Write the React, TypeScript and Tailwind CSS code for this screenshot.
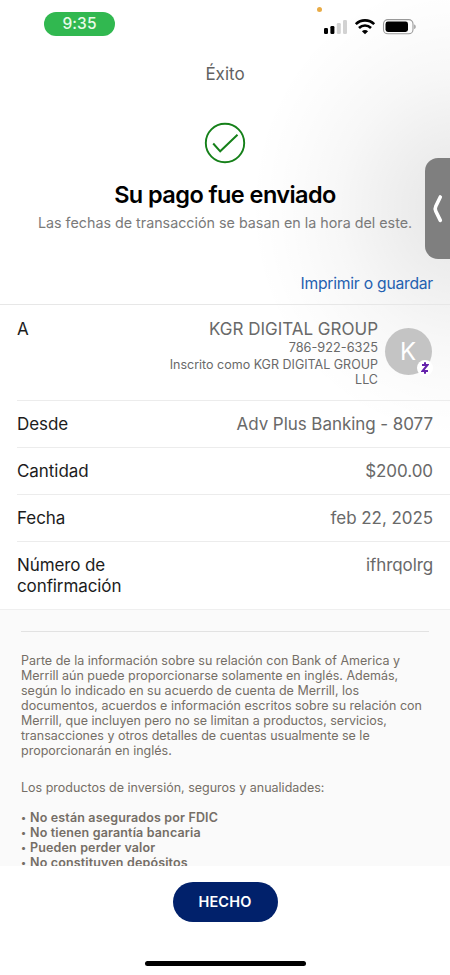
import type { ReactNode } from "react";

const paragraph = [
  "Parte de la información sobre su relación con Bank of America y",
  "Merrill aún puede proporcionarse solamente en inglés. Además,",
  "según lo indicado en su acuerdo de cuenta de Merrill, los",
  "documentos, acuerdos e información escritos sobre su relación con",
  "Merrill, que incluyen pero no se limitan a productos, servicios,",
  "transacciones y otros detalles de cuentas usualmente se le",
  "proporcionarán en inglés.",
];

const notices = [
  "No están asegurados por FDIC",
  "No tienen garantía bancaria",
  "Pueden perder valor",
  "No constituyen depósitos",
];

function StatusBar() {
  return (
    <div className="relative flex h-[46px] shrink-0 items-start justify-between pr-[33px] pl-[44px]">
      <span className="mt-3 flex h-6 w-[71px] items-center justify-center rounded-full bg-[#31b850] text-[15.5px] font-medium tracking-[0.1px] text-[#e9fbe9]">
        9:35
      </span>
      <span className="absolute top-[7px] left-[317px] size-[5px] rounded-full bg-[#e9ab45]" />
      <svg width="93" height="18" viewBox="0 0 93 18" className="mt-[18px]">
        {/* Signal */}
        <rect x="0" y="10" width="4" height="6" rx="1.2" />
        <rect x="6.4" y="8" width="4" height="8" rx="1.2" />
        <rect x="12.8" y="5" width="4" height="11" rx="1.2" fill="#d2d2d2" />
        <rect x="19" y="2" width="4" height="14" rx="1.2" fill="#d2d2d2" />
        {/* Wi-Fi */}
        <g fill="none" stroke="#000" strokeWidth="2.6">
          <path d="M31.8 6.1a13.2 13.2 0 0 1 18.4 0" />
          <path d="M35 10a8.5 8.5 0 0 1 12 0" />
        </g>
        <path d="M37.9 13.2a4.8 4.8 0 0 1 6.2 0L41 16.200z" />
        {/* Battery */}
        <rect x="59.500" y="1.600" width="29.500" height="14.200" rx="4.4" fill="none" stroke="#999" strokeWidth="1.1" />
        <rect x="61.500" y="3.500" width="22.500" height="10.400" rx="2.4" />
        <path d="M90.3 6.400c1.7.5 1.7 4.1 0 4.600z" fill="#888" />
      </svg>
    </div>
  );
}

function Row({ label, children }: { label: string; children: ReactNode }) {
  return (
    <div className="ml-[17px] flex h-[47px] items-center justify-between border-b border-[#ececec] pt-[2px] pr-[17px] text-[17px] tracking-[-0.06px]">
      <span className="text-[#1c1c1c]">{label}</span>
      <span className="text-[#696969]">{children}</span>
    </div>
  );
}

export default function App() {
  return (
    <main className="relative flex h-[975px] w-[450px] flex-col overflow-hidden bg-white font-['Inter',sans-serif] whitespace-nowrap">
      {/* Soft shadow cast by the side handle */}
      <div className="pointer-events-none absolute inset-x-0 top-0 h-[500px] bg-[radial-gradient(ellipse_210px_230px_at_460px_208px,rgba(0,0,0,0.1),rgba(0,0,0,0.065)_30%,rgba(0,0,0,0.03)_58%,rgba(0,0,0,0.01)_82%,transparent)]" />
      <StatusBar />

      <header className="relative flex h-[258px] shrink-0 flex-col items-center">
        <h2 className="mt-[17px] text-[17px] leading-[22px] text-[#626262]">Éxito</h2>
        <svg width="42" height="42" viewBox="0 0 42 42" fill="none" stroke="#158019" className="mt-[37px]">
          <circle cx="21" cy="21" r="19.2" strokeWidth="1.9" />
          <path d="m9.2 21.5 7 7.8L33.500 12.800" strokeWidth="2" />
        </svg>
        <h1 className="mt-[15px] text-[23.500px] leading-8 font-semibold tracking-[-0.57px] text-black">Su pago fue enviado</h1>
        <p className="mt-[2px] text-[14.300px] leading-5 text-[#7a7a7a]">
          Las fechas de transacción se basan en la hora del este.
        </p>
        <a className="mt-[39px] mr-[17px] self-end text-[15.700px] leading-6 tracking-[-0.24px] text-[#2360b0]">Imprimir o guardar</a>
      </header>

      <section className="relative shrink-0 border-t border-[#e7e7e7]">
        <div className="ml-[17px] flex h-24 border-b border-[#ececec] pt-[13px] pr-[18px]">
          <span className="text-[17px] leading-[22px] text-[#1c1c1c]">A</span>
          <div className="ml-auto flex flex-col items-end text-[#696969]">
            <span className="text-[17px] leading-[22px]">KGR DIGITAL GROUP</span>
            <span className="text-[12.750px] leading-4">786-922-6325</span>
            <span className="text-[12.500px] leading-[17px]">Inscrito como KGR DIGITAL GROUP</span>
            <span className="text-[12.500px] leading-[14px]">LLC</span>
          </div>
          <div className="relative mt-[10px] ml-[7px] flex size-[47px] items-center justify-center rounded-full bg-[#c4c4c4] text-[24px] text-white">
            <span className="mr-px">K</span>
            <span className="absolute right-[-1px] bottom-[-1px] flex size-4 items-center justify-center rounded-full bg-white">
              <svg width="8" height="12" viewBox="0 0 8 12" fill="none" stroke="#6421ab" strokeWidth="2">
                <path d="M1 3h5.500L1.500 9H7M4 .3v2.600M4 9v2.700" />
              </svg>
            </span>
          </div>
        </div>
        <Row label="Desde">Adv Plus Banking - 8077</Row>
        <Row label="Cantidad">$200.00</Row>
        <Row label="Fecha">feb 22, 2025</Row>
        <div className="ml-[17px] flex h-[67px] justify-between pt-[13px] pr-[17px] text-[17px] leading-[21px] tracking-[-0.1px]">
          <span className="text-[#1c1c1c]">
            Número de
            <br />
            confirmación
          </span>
          <span className="text-[#696969]">ifhrqolrg</span>
        </div>
      </section>

      <section className="relative h-[257px] shrink-0 overflow-hidden border-t border-[#efefef] bg-[#fafafa] px-[21px] text-[12.500px] leading-[15px] text-[#756e66]">
        <hr className="mt-[21px] border-[#e2e2e2]" />
        <p className="mt-[21px]">
          {paragraph.map((line) => (
            <span key={line} className="block">
              {line}
            </span>
          ))}
        </p>
        <p className="mt-[22px]">Los productos de inversión, seguros y anualidades:</p>
        <ul className="mt-[15px] font-semibold tracking-[0.15px]">
          {notices.map((notice) => (
            <li key={notice} className="flex">
              <span className="w-[9px] text-[10px]">•</span>
              {notice}
            </li>
          ))}
        </ul>
      </section>

      <footer className="flex grow flex-col items-center">
        <button className="mt-4 h-10 w-[105px] rounded-full bg-[#01216b] text-[14.500px] font-semibold tracking-[0.2px] text-white">HECHO</button>
        <div className="mt-[39px] h-[5px] w-[161px] rounded-full bg-black" />
      </footer>

      {/* Side handle */}
      <button className="absolute top-[158px] left-[425px] flex h-[101px] w-[40px] rounded-[13px] bg-[#7f7f7f]">
        <svg width="12" height="30" viewBox="0 0 12 30" fill="none" stroke="#fff" strokeWidth="3.600" strokeLinecap="round" strokeLinejoin="round" className="mt-[36px] ml-[7px]">
          <path d="M8.300 3 3.800 12.200Q2.600 14.700 3.800 17.200L8.300 26.400" />
        </svg>
      </button>
    </main>
  );
}
